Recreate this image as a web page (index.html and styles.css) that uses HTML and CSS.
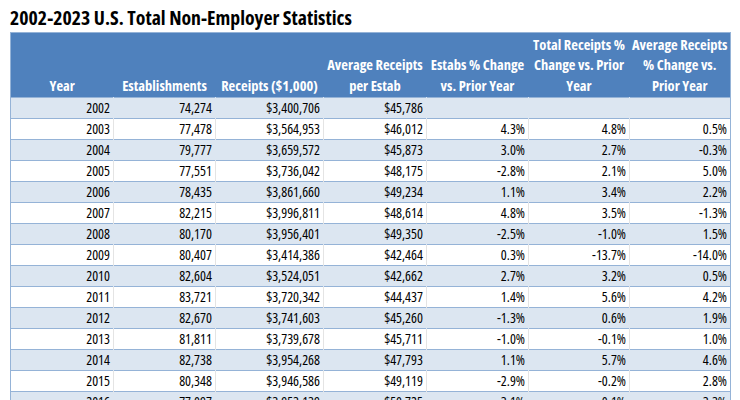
FILE: index.html
```html
<!DOCTYPE html>
<html>
<head>
<meta charset="utf-8">
<link rel="stylesheet" href="styles.css">
</head>
<body>
<h1 class="title">2002-2023 U.S. Total Non-Employer Statistics</h1>
<table class="stats">
<colgroup>
<col class="c1"><col class="c2"><col class="c3"><col class="c4"><col class="c5"><col class="c6"><col class="c7">
</colgroup>
<thead>
<tr>
<th>Year</th>
<th>Establishments</th>
<th>Receipts ($1,000)</th>
<th>Average Receipts<br>per Estab</th>
<th>Estabs % Change<br>vs. Prior Year</th>
<th>Total Receipts %<br>Change vs. Prior<br>Year</th>
<th>Average Receipts<br>% Change vs.<br>Prior Year</th>
</tr>
</thead>
<tbody>
<tr class="alt"><td>2002</td><td>74,274</td><td>$3,400,706</td><td>$45,786</td><td></td><td></td><td></td></tr>
<tr><td>2003</td><td>77,478</td><td>$3,564,953</td><td>$46,012</td><td>4.3%</td><td>4.8%</td><td>0.5%</td></tr>
<tr class="alt"><td>2004</td><td>79,777</td><td>$3,659,572</td><td>$45,873</td><td>3.0%</td><td>2.7%</td><td>-0.3%</td></tr>
<tr><td>2005</td><td>77,551</td><td>$3,736,042</td><td>$48,175</td><td>-2.8%</td><td>2.1%</td><td>5.0%</td></tr>
<tr class="alt"><td>2006</td><td>78,435</td><td>$3,861,660</td><td>$49,234</td><td>1.1%</td><td>3.4%</td><td>2.2%</td></tr>
<tr><td>2007</td><td>82,215</td><td>$3,996,811</td><td>$48,614</td><td>4.8%</td><td>3.5%</td><td>-1.3%</td></tr>
<tr class="alt"><td>2008</td><td>80,170</td><td>$3,956,401</td><td>$49,350</td><td>-2.5%</td><td>-1.0%</td><td>1.5%</td></tr>
<tr><td>2009</td><td>80,407</td><td>$3,414,386</td><td>$42,464</td><td>0.3%</td><td>-13.7%</td><td>-14.0%</td></tr>
<tr class="alt"><td>2010</td><td>82,604</td><td>$3,524,051</td><td>$42,662</td><td>2.7%</td><td>3.2%</td><td>0.5%</td></tr>
<tr><td>2011</td><td>83,721</td><td>$3,720,342</td><td>$44,437</td><td>1.4%</td><td>5.6%</td><td>4.2%</td></tr>
<tr class="alt"><td>2012</td><td>82,670</td><td>$3,741,603</td><td>$45,260</td><td>-1.3%</td><td>0.6%</td><td>1.9%</td></tr>
<tr><td>2013</td><td>81,811</td><td>$3,739,678</td><td>$45,711</td><td>-1.0%</td><td>-0.1%</td><td>1.0%</td></tr>
<tr class="alt"><td>2014</td><td>82,738</td><td>$3,954,268</td><td>$47,793</td><td>1.1%</td><td>5.7%</td><td>4.6%</td></tr>
<tr><td>2015</td><td>80,348</td><td>$3,946,586</td><td>$49,119</td><td>-2.9%</td><td>-0.2%</td><td>2.8%</td></tr>
<tr class="alt"><td>2016</td><td>77,097</td><td>$3,953,139</td><td>$50,725</td><td>-3.1%</td><td>0.1%</td><td>3.3%</td></tr>
</tbody>
</table>
</body>
</html>
```
FILE: styles.css
```css
html, body {
  margin: 0;
  padding: 0;
  background: #ffffff;
  overflow: hidden;
}
body {
  padding: 0 10px;
  font-family: "Open Sans", "Liberation Sans", sans-serif;
  font-stretch: 75%;
  color: #000000;
}
.title {
  margin: 0;
  height: 32px;
  font-size: 19.8px;
  font-weight: 700;
  line-height: 35px;
  white-space: nowrap;
  color: #000;
}
.stats {
  width: 720px;
  table-layout: fixed;
  border-collapse: collapse;
  border: 1px solid #95b3d7;
  font-size: 14px;
}
.c1 { width: 103px; }
.c2 { width: 102px; }
.c3 { width: 108px; }
.c4 { width: 103px; }
.c5 { width: 102px; }
.c6 { width: 101px; }
.c7 { width: 101px; }
.stats th {
  background: #4f81bd;
  color: #ffffff;
  font-weight: 700;
  font-size: 14.5px;
  line-height: 20.5px;
  height: 63px;
  padding: 0 1px 1px;
  vertical-align: bottom;
  text-align: center;
  white-space: nowrap;
}
.stats td {
  height: 20px;
  padding: 0 3px 0 0;
  line-height: 20px;
  text-align: right;
  white-space: nowrap;
  border-top: 1px solid #95b3d7;
  border-right: 1px solid #e4e4e4;
  background: #ffffff;
}
.stats td:last-child {
  border-right: 1px solid #95b3d7;
}
.stats tr.alt td {
  background: #dce6f1;
  border-right-color: #dce6f1;
}
.stats tr.alt td:last-child {
  border-right-color: #95b3d7;
}
```
